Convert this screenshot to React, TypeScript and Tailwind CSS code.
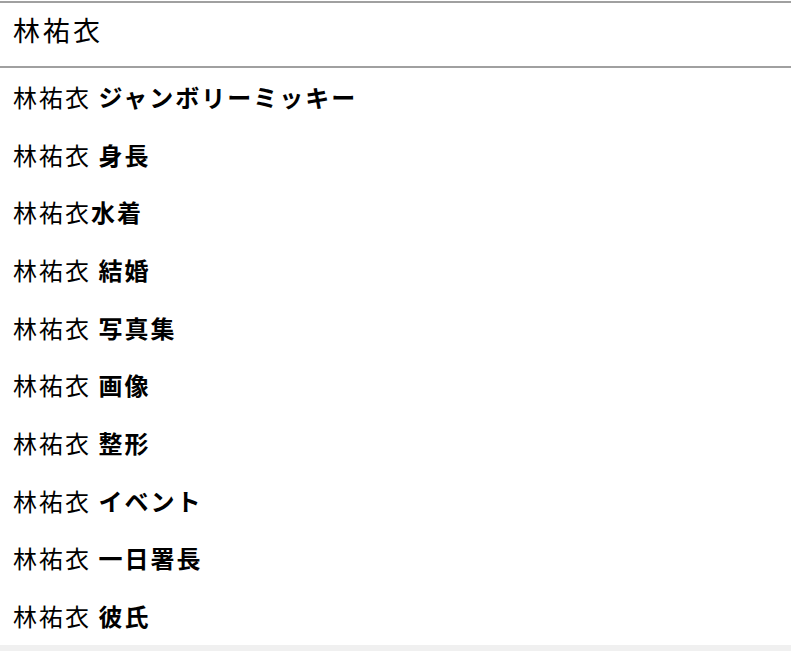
import React from 'react';

const query = '林祐衣';

// Suggestions returned for the current query
const suggestions = [
  { prefix: '林祐衣 ', rest: 'ジャンボリーミッキー' },
  { prefix: '林祐衣 ', rest: '身長' },
  { prefix: '林祐衣', rest: '水着' },
  { prefix: '林祐衣 ', rest: '結婚' },
  { prefix: '林祐衣 ', rest: '写真集' },
  { prefix: '林祐衣 ', rest: '画像' },
  { prefix: '林祐衣 ', rest: '整形' },
  { prefix: '林祐衣 ', rest: 'イベント' },
  { prefix: '林祐衣 ', rest: '一日署長' },
  { prefix: '林祐衣 ', rest: '彼氏' },
];

const App = () => {
  return (
    <div
      className="min-h-[651px] bg-[#f0f0f0] text-black"
      style={{ fontFamily: '"Noto Sans CJK JP", "Noto Sans", sans-serif' }}
    >
      <div className="bg-white pt-px">
        {/* Search box */}
        <div className="h-[67px] border-y-2 border-[#a0a0a0] flex items-center pl-[13px] pb-[8px]">
          <input
            value={query}
            readOnly
            className="w-full outline-none bg-transparent text-[27px] tracking-[3px] text-black"
          />
        </div>

        {/* Suggestions */}
        <ul>
          {suggestions.map((s, i) => (
            <li key={i} className="h-[57.7px] flex items-center pl-[13px] text-[24px] tracking-[2px] whitespace-pre">
              <span className="font-normal">{s.prefix}</span>
              <span className="font-bold">{s.rest}</span>
            </li>
          ))}
        </ul>
      </div>
    </div>
  );
};

export default App;
